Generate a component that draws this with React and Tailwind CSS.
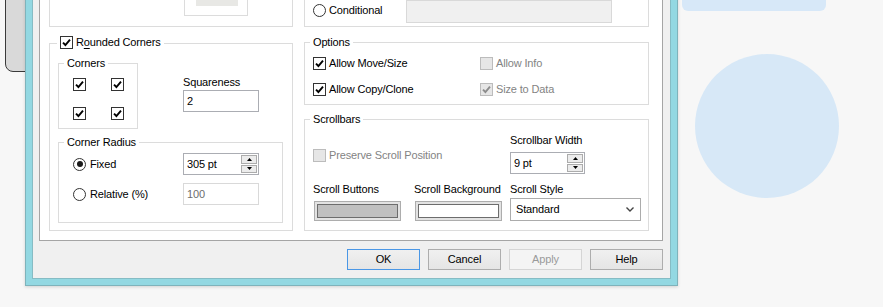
import React from 'react';

function Check({ checked, disabled }) {
  return (
    <span
      className={`w-[13px] h-[13px] border flex items-center justify-center shrink-0 ${
        disabled ? 'border-[#bcbcbc] bg-[#e6e6e6]' : 'border-[#333333] bg-white'
      }`}
    >
      {checked && (
        <svg width="9" height="9" viewBox="0 0 9 9">
          <path d="M1 4.6 L3.4 7 L8 1.6" fill="none" stroke={disabled ? '#8c8c8c' : '#000'} strokeWidth="1.9" />
        </svg>
      )}
    </span>
  );
}

function Radio({ on }) {
  return (
    <span className="w-[13px] h-[13px] rounded-full border border-[#333333] bg-white flex items-center justify-center shrink-0">
      {on && <span className="w-[6px] h-[6px] rounded-full bg-[#1a1a1a]" />}
    </span>
  );
}

function Arrow({ down }) {
  return (
    <svg width="5" height="3" viewBox="0 0 5 3">
      <path d={down ? 'M0 0 L5 0 L2.5 3Z' : 'M0 3 L5 3 L2.5 0Z'} fill="#000" />
    </svg>
  );
}

function Spinner({ value, w }) {
  return (
    <div className={`${w} h-[22px] border border-[#abadb3] bg-white flex`}>
      <span className="flex-1 pl-[3px] flex items-center">{value}</span>
      <div className="w-[17px] flex flex-col gap-[1px] py-[1px] pr-[1px]">
        <span className="flex-1 border border-[#acacac] bg-[#ececec] flex items-center justify-center">
          <Arrow />
        </span>
        <span className="flex-1 border border-[#acacac] bg-[#ececec] flex items-center justify-center">
          <Arrow down />
        </span>
      </div>
    </div>
  );
}

function Group({ title, legendClass = 'ml-[5px]', className = '', children }) {
  return (
    <fieldset className={`border border-[#dcdcdc] ${className}`}>
      <legend className={`${legendClass} px-[3px] leading-[13px]`}>{title}</legend>
      {children}
    </fieldset>
  );
}

function Swatch({ fill }) {
  return (
    <div className="mt-[5px] ml-[1px] w-[87px] h-[20px] border border-[#adadad] bg-[#e3e3e3] p-[2px]">
      <div className={`h-full border border-[#6d6d6d] ${fill}`} />
    </div>
  );
}

function Btn({ children, primary, disabled }) {
  let cls = 'border-[#adadad] bg-gradient-to-b from-[#f0f0f0] to-[#e5e5e5] text-black';
  if (primary) cls = 'border-[#4a97e6] bg-gradient-to-b from-[#f0f0f0] to-[#e5e5e5] text-black';
  if (disabled) cls = 'border-[#d5d5d5] bg-[#f4f4f4] text-[#9a9a9a]';
  return <div className={`w-[73px] h-[21px] border flex items-center justify-center ${cls}`}>{children}</div>;
}

export default function App() {
  return (
    <div className="relative w-[883px] h-[307px] overflow-hidden bg-[#f7f7f7] font-['Liberation_Sans',Arial,sans-serif] text-[11px] tracking-[-0.15px] text-black">
      {/* window behind, left */}
      <div className="absolute left-[5px] top-[-20px] w-[40px] h-[92px] border border-[#3a3a3a] rounded-bl-[8px] bg-[#d9d9d9]" />
      {/* light blue shapes on the right */}
      <div className="absolute left-[682px] top-[-20px] w-[144px] h-[31px] rounded-b-[6px] bg-[#d7e8f8]" />
      <div className="absolute left-[695px] top-[54px] w-[144px] h-[144px] rounded-full bg-[#d7e8f7]" />

      {/* dialog */}
      <div className="absolute left-[25px] top-[-60px] w-[653px] border border-[#7fb3bb] bg-[#93d8e2] p-[6px] shadow-[0_1px_3px_rgba(0,0,0,0.15)]">
        <div className="border border-[#86bcc4] bg-[#f0f0f0] pt-[6px] pl-[6px] pr-[7px] pb-[8px]">
          <div className="border border-[#a5a5a5] bg-white pt-[9px] pl-[9px] pr-[13px] pb-[9px] flex items-start gap-[11px]">
            {/* left column */}
            <div className="w-[244px] flex flex-col">
              <div className="h-[63px] border border-[#dcdcdc] flex items-end pl-[134px] pb-[10px]">
                <div className="w-[64px] h-[40px] border border-[#dcdcdc] flex items-end pl-[11px] pb-[9px]">
                  <div className="w-[42px] h-[20px] bg-[#e8e8e5]" />
                </div>
              </div>

              <Group
                className="mt-[9px]"
                legendClass="ml-[7px]"
                title={
                  <span className="inline-flex items-center gap-[3px] h-[13px]">
                    <Check checked />
                    <span>
                      R<span className="underline underline-offset-[2px]">o</span>unded Corners
                    </span>
                  </span>
                }
              >
                <div className="pt-[7px] pl-[8px] pr-[9px] pb-[7px]">
                  <div className="flex items-start">
                    <Group title="Corners" className="w-[80px]">
                      <div className="pt-[8px] pl-[14px] pb-[8px] grid grid-cols-[13px_13px] gap-x-[25px] gap-y-[16px]">
                        <Check checked />
                        <Check checked />
                        <Check checked />
                        <Check checked />
                      </div>
                    </Group>
                    <div className="ml-[45px] mt-[19px] flex flex-col">
                      <span className="leading-[13px]">Squareness</span>
                      <div className="mt-[1px] w-[76px] h-[22px] border border-[#abadb3] bg-white pl-[3px] flex items-center">2</div>
                    </div>
                  </div>

                  <Group title="Corner Radius" className="mt-[7px]">
                    <div className="pt-[4px] pl-[14px] pb-[17px] flex flex-col gap-[8px]">
                      <div className="flex items-center">
                        <div className="w-[110px] flex items-center gap-[4px]">
                          <Radio on />
                          <span>Fixed</span>
                        </div>
                        <Spinner value="305 pt" w="w-[76px]" />
                      </div>
                      <div className="flex items-center">
                        <div className="w-[110px] flex items-center gap-[4px]">
                          <Radio />
                          <span>Relative (%)</span>
                        </div>
                        <div className="w-[76px] h-[22px] border border-[#d9d9d9] bg-white pl-[3px] flex items-center text-[#6d6d6d]">100</div>
                      </div>
                    </div>
                  </Group>
                </div>
              </Group>
            </div>

            {/* right column */}
            <div className="flex-1 flex flex-col">
              <div className="h-[63px] border border-[#dcdcdc] flex items-end pl-[8px] pb-[3px]">
                <div className="w-[93px] h-[22px] flex items-start gap-[3px] pt-[3px]">
                  <Radio />
                  <span className="leading-[13px]">Conditional</span>
                </div>
                <div className="w-[206px] h-[23px] border border-[#d9d9d9] bg-[#f0f0f0]" />
              </div>

              <Group title="Options" className="mt-[9px]">
                <div className="pt-[8px] pl-[8px] pb-[8px] grid grid-cols-[167px_1fr] gap-y-[13px] leading-[13px]">
                  <div className="flex items-center gap-[3px]">
                    <Check checked />
                    <span>Allow Move/Size</span>
                  </div>
                  <div className="flex items-center gap-[3px] text-[#838383]">
                    <Check disabled />
                    <span>Allow Info</span>
                  </div>
                  <div className="flex items-center gap-[3px]">
                    <Check checked />
                    <span>Allow Copy/Clone</span>
                  </div>
                  <div className="flex items-center gap-[3px] text-[#838383]">
                    <Check checked disabled />
                    <span>Size to Data</span>
                  </div>
                </div>
              </Group>

              <Group title="Scrollbars" className="mt-[8px]">
                <div className="pt-[8px] pl-[8px] pb-[9px] grid grid-cols-[101px_96px_131px] leading-[13px]">
                  <div className="col-span-2 mt-[2px] flex items-center gap-[3px] text-[#838383]">
                    <Check disabled />
                    <span>Preserve Scroll Position</span>
                  </div>
                  <div className="flex flex-col">
                    <span>Scrollbar Width</span>
                    <div className="mt-[5px]">
                      <Spinner value="9 pt" w="w-[75px]" />
                    </div>
                  </div>

                  <div className="mt-[9px] flex flex-col">
                    <span>Scroll Buttons</span>
                    <Swatch fill="bg-[#c0c0c0]" />
                  </div>
                  <div className="mt-[9px] flex flex-col">
                    <span>Scroll Background</span>
                    <Swatch fill="bg-white" />
                  </div>
                  <div className="mt-[9px] flex flex-col">
                    <span>Scroll Style</span>
                    <div className="mt-[2px] w-[131px] h-[23px] border border-[#acacac] bg-white pl-[5px] pr-[6px] flex items-center justify-between">
                      <span>Standard</span>
                      <svg width="8" height="5" viewBox="0 0 8 5">
                        <path d="M0.5 0.5 L4 4 L7.5 0.5" fill="none" stroke="#444" strokeWidth="1.4" />
                      </svg>
                    </div>
                  </div>
                </div>
              </Group>
            </div>
          </div>

          <div className="mt-[8px] flex justify-end gap-[8px]">
            <Btn primary>OK</Btn>
            <Btn>Cancel</Btn>
            <Btn disabled>Apply</Btn>
            <Btn>Help</Btn>
          </div>
        </div>
      </div>
    </div>
  );
}
